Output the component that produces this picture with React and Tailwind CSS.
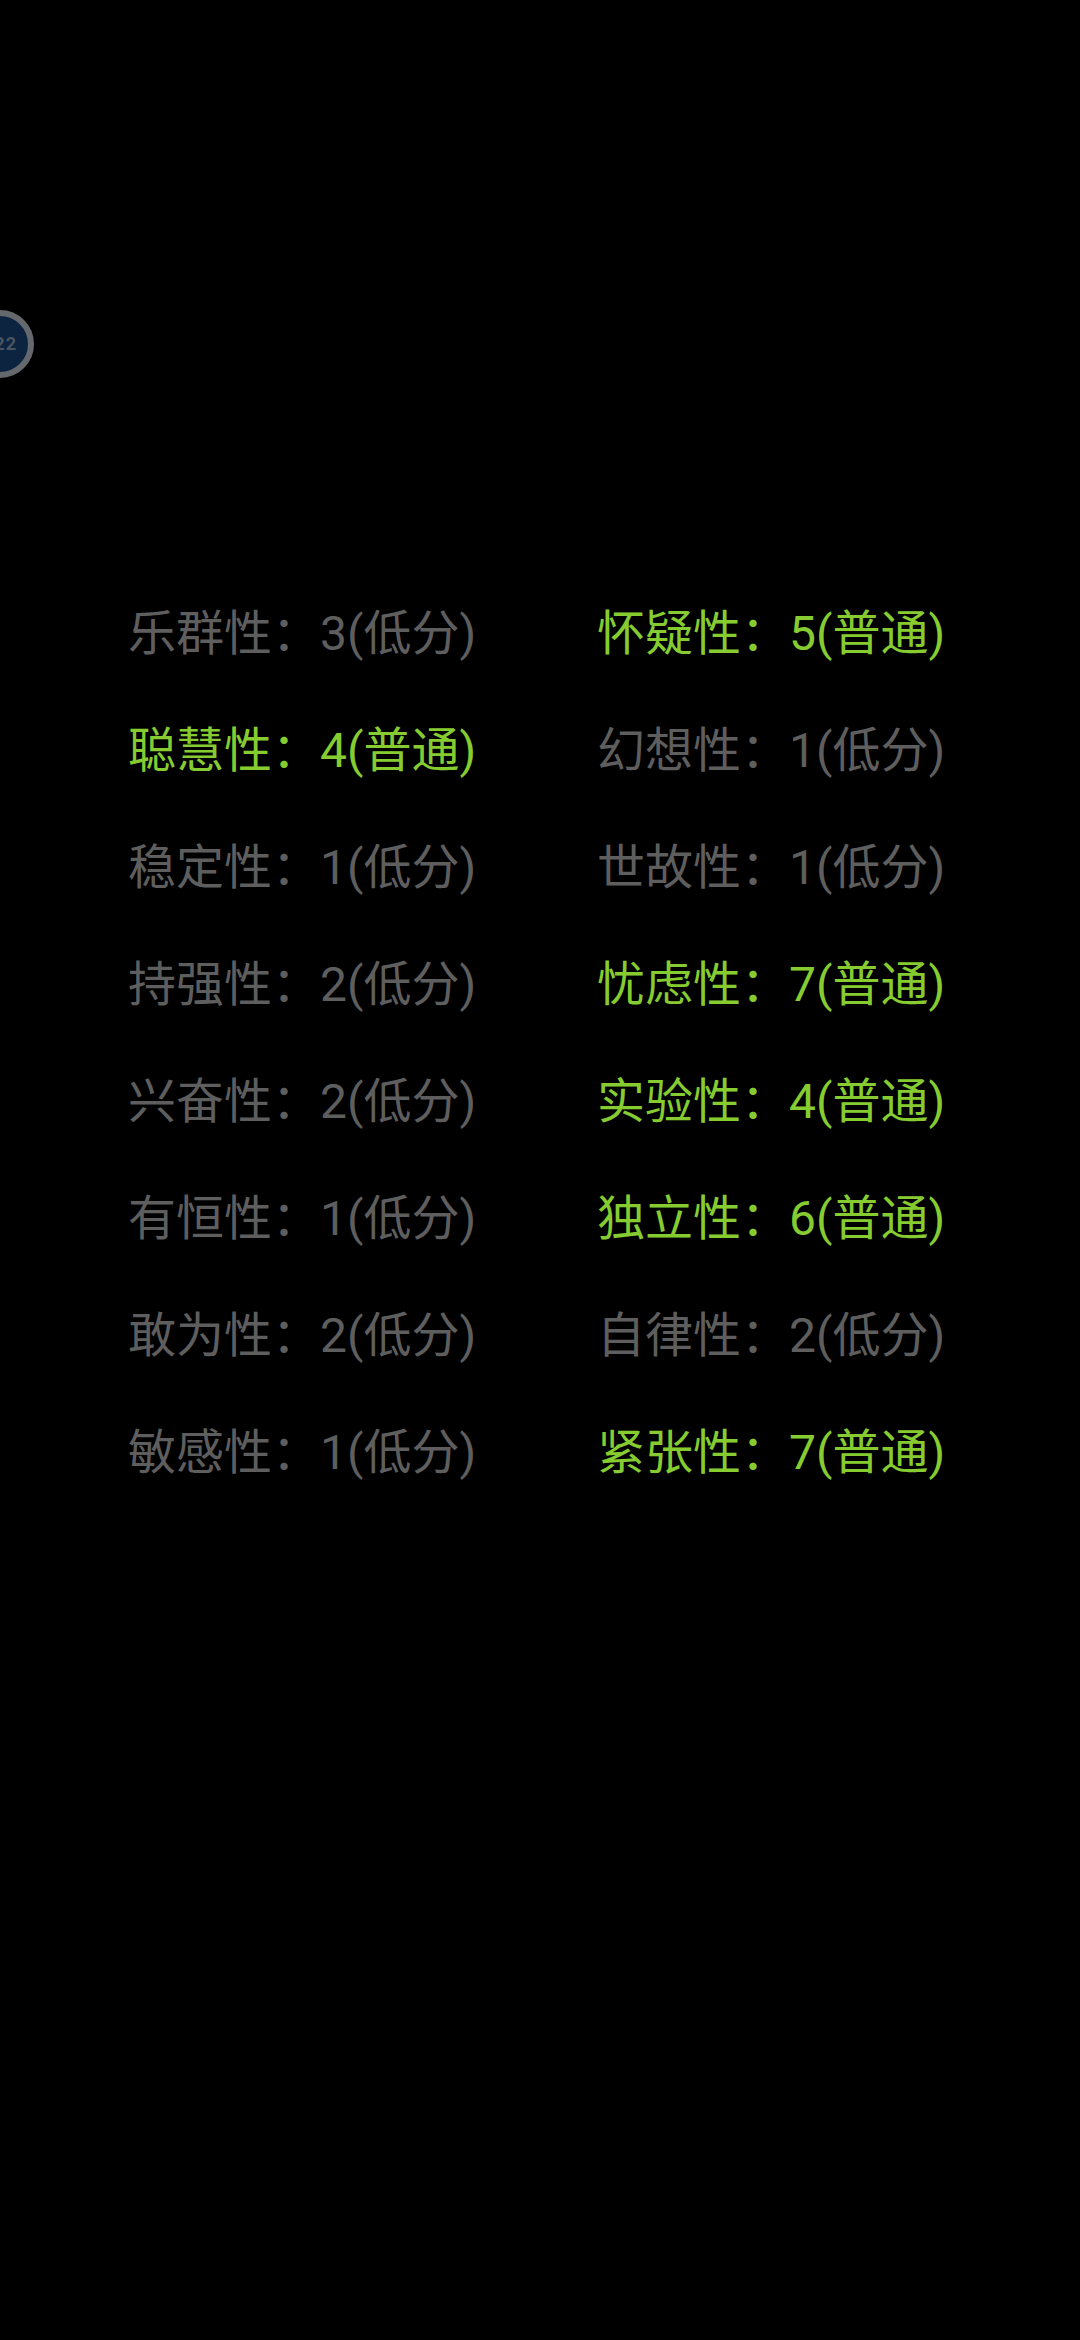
const left = [
  ["乐群性", "3", false], ["聪慧性", "4", true], ["稳定性", "1", false], ["持强性", "2", false],
  ["兴奋性", "2", false], ["有恒性", "1", false], ["敢为性", "2", false], ["敏感性", "1", false],
];
const right = [
  ["怀疑性", "5", true], ["幻想性", "1", false], ["世故性", "1", false], ["忧虑性", "7", true],
  ["实验性", "4", true], ["独立性", "6", true], ["自律性", "2", false], ["紧张性", "7", true],
];

function Column({ items, className }) {
  return (
    <div className={className}>
      {items.map(([name, score, high]) => (
        <div
          key={name}
          className={"h-[117px] flex items-center whitespace-nowrap text-[48px] leading-none " + (high ? "text-[#86cc30]" : "text-[#5e5e5e]")}
        >
          {name}：{score}({high ? "普通" : "低分"})
        </div>
      ))}
    </div>
  );
}

export default function App() {
  return (
    <div
      className="relative w-[1080px] h-[2340px] bg-black overflow-hidden"
      style={{ fontFamily: 'Roboto, "Noto Sans CJK SC", sans-serif' }}
    >
      <div className="absolute left-[-34px] top-[310px] w-[68px] h-[68px] rounded-full border-[6px] border-[#65696d] bg-[#0d2440] flex items-center justify-end pr-[11px]">
        <span className="text-[18px] font-bold leading-none tracking-[1px] text-[#4a5562]">22</span>
      </div>
      <div className="flex pt-[575px] pl-[128px]">
        <Column items={left} className="w-[469px]" />
        <Column items={right} className="w-[469px]" />
      </div>
    </div>
  );
}
